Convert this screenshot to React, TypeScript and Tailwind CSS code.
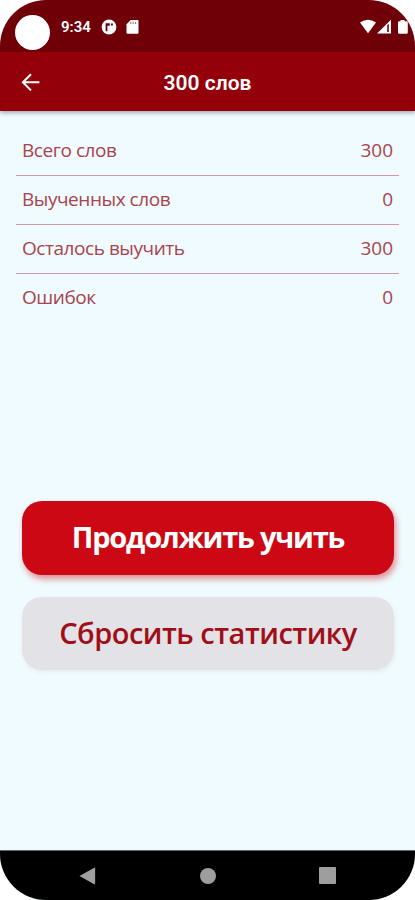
const stats = [
    { label: "Всего слов", value: 300 },
    { label: "Выученных слов", value: 0 },
    { label: "Осталось выучить", value: 300 },
    { label: "Ошибок", value: 0 },
];

const StatusBar = () => {
    return (
        <div className="flex h-[52px] shrink-0 items-start bg-[#6f0007] pl-[15px] pr-[7px] text-white">
            <div className="mt-[15px] h-[35px] w-[35px] rounded-full bg-white" />
            <div className="ml-[11px] mt-[17px] w-[30px] font-[Roboto] text-[15px] font-semibold leading-5">9:34</div>
            <svg className="ml-[10px] mt-[19px]" width="16" height="16" viewBox="0 0 16 16">
                <circle cx="8" cy="8" r="7.4" fill="#fff" />
                <path d="M4.6 12.2V4.2h4.2v2.6H6.4v5.4zM10 4.4h1.9v2H10z" fill="#6f0007" />
            </svg>
            <svg className="ml-[9px] mt-[20px]" width="13" height="14" viewBox="0 0 13 14">
                <path d="M4.7 0h6.6q1.2 0 1.2 1.2v11.4q0 1.2-1.2 1.2H1.7q-1.2 0-1.2-1.2V4.3z" fill="#fff" />
                <path d="M4.8 1.8v2.3M7.1 1.8v2.3M9.4 1.8v2.3" stroke="#6f0007" strokeOpacity=".6" />
            </svg>
            <svg className="ml-auto mt-[19px]" width="48" height="16" viewBox="0 0 48 16" fill="#fff">
                <path d="M0 3.6Q8-2.1 16 3.6L8 14.2z" />
                <path fillRule="evenodd" d="M17 14.5L31 .7v13.8zM27.2 6v7h1.6V5z" />
                <path d="M40.6 1h4v1.2h2q1.2 0 1.2 1.2v10q0 1.3-1.2 1.3h-7.4q-1.2 0-1.2-1.3v-10q0-1.2 1.2-1.2h1.4z" />
            </svg>
        </div>
    )
}

const AppBar = ({ title }: { title: string }) => {
    return (
        <div className="relative flex h-[59px] shrink-0 items-center justify-center bg-[#930009] text-white shadow-[0_2px_4px_rgba(70,80,90,0.45)]">
            <svg className="absolute left-[21px] top-[21px]" width="19" height="18" viewBox="0 0 19 18" fill="none" stroke="#fff" strokeWidth="2">
                <path d="M18.4 9.3H2M10 1.2L1.9 9.3l8.1 8.1" />
            </svg>
            <div className="mt-[5px] font-[Roboto] text-[21px] font-semibold">{title}</div>
        </div>
    )
}

const StatRow = ({ label, value }: {
    label: string,
    value: number
}) => {
    return (
        <div className="flex h-[49px] items-center justify-between border-b border-[#cf9aa3] px-[6px] pb-px text-[19px] font-normal text-[#a8444d] last:border-b-transparent">
            <span className="tracking-[-0.45px]">{label}</span>
            <span>{value}</span>
        </div>
    )
}

const NavBar = () => {
    return (
        <div className="flex h-[50px] shrink-0 items-center justify-between border-t border-[#5c6667] bg-black px-[79px]">
            <svg width="17" height="18" viewBox="0 0 17 18" fill="#9e9e9e">
                <path d="M.5 9L15.2.8q.9-.4.9.5v15.4q0 .9-.9.5z" />
            </svg>
            <div className="h-4 w-4 rounded-full bg-[#9e9e9e]" />
            <div className="h-[17px] w-[17px] rounded-[1px] bg-[#9e9e9e]" />
        </div>
    )
}

export default function App() {
    return (
        <div className="h-[900px] w-[415px] bg-white">
            <div className="flex h-full flex-col overflow-hidden rounded-[46px] bg-[#effbfe] font-['Open_Sans','Noto_Sans',sans-serif]">
                <StatusBar />
                <AppBar title="300 слов" />
                <div className="flex-1 px-4 pt-[16px]">
                    <div>
                        {stats.map((stat) => (
                            <StatRow key={stat.label} {...stat} />
                        ))}
                    </div>
                    <div className="mt-[178px] flex flex-col gap-[22px] pl-[6px] pr-[5px]">
                        <button className="h-[74px] w-full whitespace-nowrap rounded-[20px] bg-[#cc0814] pb-[2px] text-[29px] font-bold tracking-[-1.2px] text-white shadow-[2px_4px_6px_rgba(204,8,20,0.45)]">
                            Продолжить учить
                        </button>
                        <button className="h-[73px] w-full whitespace-nowrap rounded-[20px] bg-[#e3e2e7] pb-[2px] text-[29px] font-semibold tracking-[-0.5px] text-[#a10e17] shadow-[1px_2px_4px_rgba(227,226,231,0.6)]">
                            Сбросить статистику
                        </button>
                    </div>
                </div>
                <NavBar />
            </div>
        </div>
    )
}
